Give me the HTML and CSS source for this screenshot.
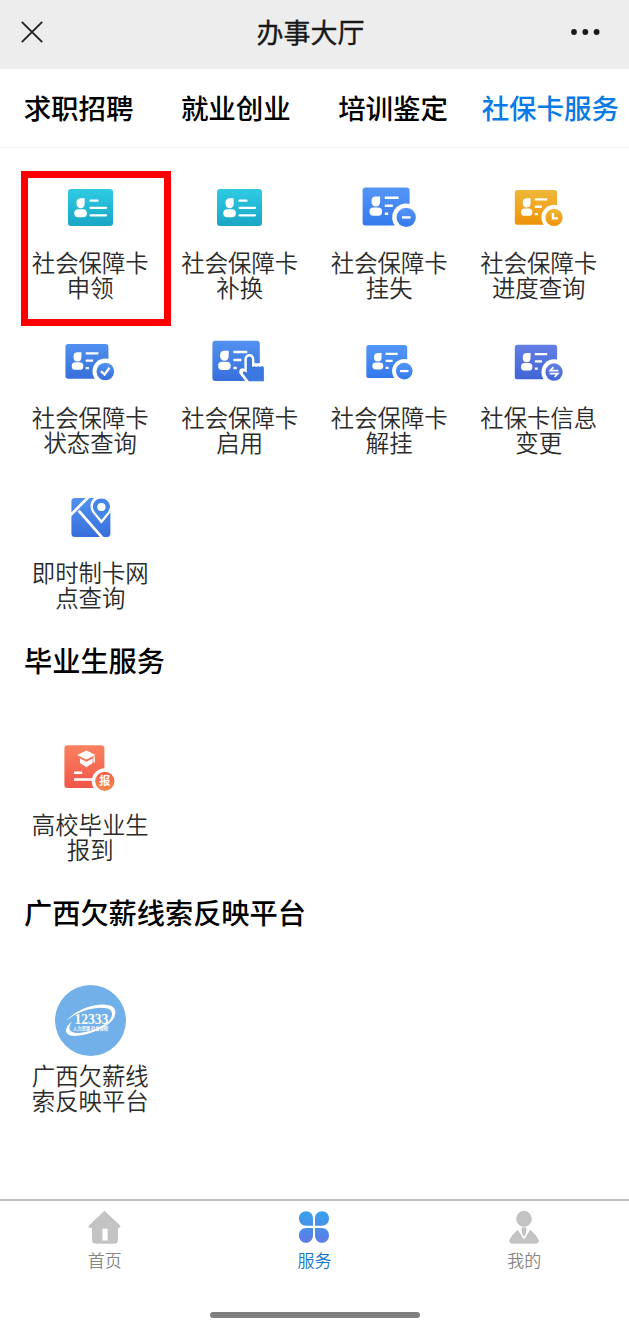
FILE: index.html
```html
<!DOCTYPE html>
<html lang="zh-CN">
<head>
<meta charset="utf-8">
<title>办事大厅</title>
<link rel="stylesheet" href="styles.css">
</head>
<body>
<svg class="defs" width="0" height="0" aria-hidden="true">
  <defs>
    <linearGradient id="teal" x1="0" y1="0" x2="0" y2="1"><stop offset="0" stop-color="#2fcbe3"/><stop offset="1" stop-color="#18a6c5"/></linearGradient>
    <linearGradient id="blue" x1="0" y1="0" x2="0" y2="1"><stop offset="0" stop-color="#5596f8"/><stop offset="1" stop-color="#3479ec"/></linearGradient>
    <linearGradient id="blue2" x1="0" y1="0" x2="0" y2="1"><stop offset="0" stop-color="#5191ef"/><stop offset="1" stop-color="#376fdb"/></linearGradient>
    <linearGradient id="gold" x1="0" y1="0" x2="0" y2="1"><stop offset="0" stop-color="#efb83a"/><stop offset="1" stop-color="#ee9308"/></linearGradient>
    <linearGradient id="indigo" x1="0" y1="0" x2="0" y2="1"><stop offset="0" stop-color="#647fe5"/><stop offset="1" stop-color="#4064d5"/></linearGradient>
    <linearGradient id="coral" x1="0" y1="0" x2="0" y2="1"><stop offset="0" stop-color="#fa8260"/><stop offset="1" stop-color="#f25548"/></linearGradient>
    <linearGradient id="orange" x1="0" y1="0" x2="0" y2="1"><stop offset="0" stop-color="#f4604b"/><stop offset="1" stop-color="#f4894d"/></linearGradient>
    <linearGradient id="clover" gradientUnits="userSpaceOnUse" x1="0" y1="0" x2="0" y2="34"><stop offset="0" stop-color="#35a4ea"/><stop offset="1" stop-color="#6079e8"/></linearGradient>
    <g id="card-lines">
      <path fill="#fff" d="M26.5 24.8v5.4a4.3 4.6 0 0 1-8.6 0v-1q0-4.4 4.4-4.4z"/>
      <rect fill="#fff" x="15.9" y="35.8" width="12.6" height="8.2" rx="4"/>
      <path stroke="#fff" stroke-width="2.5" d="M31.2 26H45M31.2 34h8M31.2 42h3.4"/>
    </g>
    <g id="badge-card">
      <rect x="9" y="15.7" width="47" height="38" rx="3"/>
      <use href="#card-lines"/>
      <circle cx="52.6" cy="45.7" r="14" fill="#fff"/>
      <circle cx="52.6" cy="45.7" r="9.6"/>
    </g>
  </defs>
</svg>

<header class="navbar">
  <svg class="close" viewBox="0 0 22 22"><path d="M.8.8l20.4 20.4M21.2.8L.8 21.2" fill="none" stroke="#222" stroke-width="1.9"/></svg>
  <h1 class="title">办事大厅</h1>
  <svg class="more" viewBox="0 0 30 8"><g fill="#1a1a1a"><circle cx="4" cy="4" r="2.9"/><circle cx="15.3" cy="4" r="2.9"/><circle cx="26.6" cy="4" r="2.9"/></g></svg>
</header>

<nav class="tabs">
  <a class="tab">求职招聘</a>
  <a class="tab">就业创业</a>
  <a class="tab">培训鉴定</a>
  <a class="tab tab-active">社保卡服务</a>
</nav>

<main class="content">
  <ul class="grid">
    <li class="item item-marked">
      <svg class="icon" viewBox="0 0 71 71"><rect x="13" y="17" width="45" height="37" rx="3" fill="url(#teal)"/><path fill="#fff" d="M29.7 26.2v5.6a4.1 4.4 0 0 1-8.2 0v-1q0-4.6 4.4-4.6z"/><rect fill="#fff" x="19.3" y="37.2" width="12.6" height="8" rx="3.9"/><path d="M35.5 28.7h7M35.5 35.8H51M35.5 43.3H51" stroke="#fff" stroke-width="2.3" stroke-linecap="round"/></svg>
      <span class="label">社会保障卡<br>申领</span>
    </li>
    <li class="item">
      <svg class="icon" viewBox="0 0 71 71"><rect x="13" y="17" width="45" height="37" rx="3" fill="url(#teal)"/><path fill="#fff" d="M29.7 26.2v5.6a4.1 4.4 0 0 1-8.2 0v-1q0-4.6 4.4-4.6z"/><rect fill="#fff" x="19.3" y="37.2" width="12.6" height="8" rx="3.9"/><path d="M35.5 28.7h7M35.5 35.8H51M35.5 43.3H51" stroke="#fff" stroke-width="2.3" stroke-linecap="round"/></svg>
      <span class="label">社会保障卡<br>补换</span>
    </li>
    <li class="item">
      <svg class="icon" viewBox="0 0 71 71"><g transform="translate(-.4 -.3)"><use href="#badge-card" fill="url(#blue)"/><path d="M48.4 45.7h8.6" stroke="#fff" stroke-width="2.4"/></g></svg>
      <span class="label">社会保障卡<br>挂失</span>
    </li>
    <li class="item">
      <svg class="icon" viewBox="0 0 71 71"><g transform="translate(3.7 3.8) scale(.9 .91)"><use href="#badge-card" fill="url(#gold)"/><path d="M51.4 40.8v6h5.6" fill="none" stroke="#fff" stroke-width="2.7"/></g></svg>
      <span class="label">社会保障卡<br>进度查询</span>
    </li>
    <li class="item">
      <svg class="icon" viewBox="0 0 71 71"><g transform="translate(2.2 2.6) scale(.915)"><use href="#badge-card" fill="url(#blue2)"/><path d="M47.8 45.3l4 3.8 5.3-7.4" fill="none" stroke="#fff" stroke-width="2.5"/></g></svg>
      <span class="label">社会保障卡<br>状态查询</span>
    </li>
    <li class="item">
      <svg class="icon" viewBox="0 0 71 71"><rect x="8.4" y="13.7" width="47.4" height="40.3" rx="3" fill="url(#blue2)"/><use href="#card-lines" transform="translate(-1.8 -1)"/><path d="M42.4 55.5l-6.6-8.6c-2-4.2 1.6-7.2 4.6-5V32.6c0-7.4 10-7.4 10 0v3.6h9.8v19.3z" fill="#fff"/><path d="M44.8 54.3l-5.6-7.6c-1-2.5 1.4-3.2 3.6-.9V32.6c0-4 5.2-4 5.2 0v7.2h1.4l.9-.9.9.9h2.1l.9-.9.9.9h1.9l.8-.9c1 .1 2.1.8 2.1 2v13.4z" fill="#3b78e0"/></svg>
      <span class="label">社会保障卡<br>启用</span>
    </li>
    <li class="item">
      <svg class="icon" viewBox="0 0 71 71"><g transform="translate(4.5 4.3) scale(.87)"><use href="#badge-card" fill="url(#blue)"/><path d="M47.8 45.7h9.6" stroke="#fff" stroke-width="2.6"/></g></svg>
      <span class="label">社会保障卡<br>解挂</span>
    </li>
    <li class="item">
      <svg class="icon" viewBox="0 0 71 71"><g transform="translate(3.7 3.5) scale(.9 .91)"><use href="#badge-card" fill="url(#indigo)"/><path d="M57.4 44.1H48.4l3.6-3.8M47.8 47.3h9l-3.6 3.8" fill="none" stroke="#fff" stroke-width="1.9"/></g></svg>
      <span class="label">社保卡信息<br>变更</span>
    </li>
    <li class="item">
      <svg class="icon" viewBox="0 0 71 71"><rect x="16.4" y="16" width="39" height="39" rx="3.5" fill="url(#blue2)"/><path d="M15.5 33.2L33.5 15M23.6 28.6L47.5 55.8" stroke="#fff" stroke-width="2.8"/><path d="M46.4 41.8L38.3 31.6C31.5 22.5 38 13.5 46.4 13.5s14.9 9 8.1 18.1z" fill="#fff"/><path d="M46.4 37.9l-6.4-7.6c-5.2-7 0-13.9 6.4-13.9s11.6 6.9 6.4 13.9z" fill="#4585e8"/><circle cx="46.4" cy="25" r="4.1" fill="#fff"/></svg>
      <span class="label">即时制卡网<br>点查询</span>
    </li>
  </ul>

  <section>
    <h2 class="heading">毕业生服务</h2>
    <ul class="grid">
      <li class="item">
        <svg class="icon" viewBox="0 0 71 71"><rect x="9.4" y="11.3" width="40" height="42.7" rx="3" fill="url(#coral)"/><path d="M22 21l9.4-4.6 9 4.6-9 4.5zM25 24.6l6.4 3.2 6.2-3.2v4.4l-6.2 4.2L25 29zM38.4 22.5h1.5v6h-1.5z" fill="#fff"/><path d="M19 38.7h8.2M19 45.6h20" stroke="#fff" stroke-width="2.5"/><circle cx="49.8" cy="47.3" r="13" fill="#fff"/><circle cx="49.8" cy="47.3" r="9.6" fill="url(#orange)"/><text class="badge-text" x="49.8" y="51.3" text-anchor="middle">报</text></svg>
        <span class="label">高校毕业生<br>报到</span>
      </li>
    </ul>
  </section>

  <section>
    <h2 class="heading">广西欠薪线索反映平台</h2>
    <ul class="grid">
      <li class="item">
        <svg class="icon" viewBox="0 0 71 71"><circle cx="35.5" cy="35.5" r="35.5" fill="#72b0e9"/><path d="M11.5 35.5C22 23.5 42 17.5 54 20.2c10 2.6 8 13-3.5 21C57.5 33 60 26 52.5 23.5 42 20.5 23 26 11.5 35.5z" fill="#fff"/><path d="M17 36.5C8 43.5 9 52 22 50.8 38 49.4 54 41 60.5 31c-8 8-22 15.3-34.5 16.8-12 1.4-14-4.2-9-11.3z" fill="#fff"/><text class="logo-number" x="36.4" y="38.8" text-anchor="middle" textLength="34" lengthAdjust="spacingAndGlyphs">12333</text><text class="logo-caption" x="18" y="45" textLength="35" lengthAdjust="spacingAndGlyphs">人力资源 社会保障</text></svg>
        <span class="label">广西欠薪线<br>索反映平台</span>
      </li>
    </ul>
  </section>
</main>

<footer class="footer">
  <nav class="tabbar">
    <a class="tabbar-item">
      <svg class="tabbar-icon" viewBox="0 0 34 34"><path d="M16.5 1.2l15.4 14.6q.8 1.7-1.1 1.7h-1.3v13q0 2.7-2.7 2.7H7.2q-2.7 0-2.7-2.7v-13H2.2q-1.9 0-1-1.7z" fill="#c3c3c3" stroke="#b7b7b7" stroke-width=".7"/><path d="M14.4 18.7h5.2v11.8h-5.2z" fill="#fff"/></svg>
      <span>首页</span>
    </a>
    <a class="tabbar-item tabbar-active">
      <svg class="tabbar-icon" viewBox="0 0 34 34"><path fill="url(#clover)" d="M16 15.8H9.5C4.5 15.8 2 12.6 2 8.3 2 4.2 5 1.2 9 1.2s7 3 7 7.4zM18 15.8h6.5c5 0 7.5-3.2 7.5-7.5 0-4.1-3-7.1-7-7.1s-7 3-7 7.4zM16 18H9.5C4.5 18 2 21.2 2 25.5c0 4.1 3 7.3 7 7.3s7-3.2 7-7.6zM18 18h6.5c5 0 7.5 3.2 7.5 7.5 0 4.1-3 7.3-7 7.3s-7-3.2-7-7.6z"/></svg>
      <span>服务</span>
    </a>
    <a class="tabbar-item">
      <svg class="tabbar-icon" viewBox="0 0 34 34"><g fill="#c3c3c3" stroke="#b7b7b7" stroke-width=".6"><ellipse cx="17" cy="8.8" rx="7.4" ry="7.6"/><path d="M10.7 20.3L17 30.3l6.3-10q5 3.7 8 9.7.7 3.2-2.4 3.2H5.1q-3 0-2.3-3.2 2.9-6 7.9-9.7z"/><path d="M15.4 17.8h3.2l.6 2.2-1 4.3L17 26l-1.2-1.7-1-4.3z"/></g></svg>
      <span>我的</span>
    </a>
  </nav>
  <div class="home-indicator"></div>
</footer>
</body>
</html>
```

FILE: styles.css
```css
*,
*::after {
  box-sizing: border-box;
}

body {
  margin: 0;
  width: 629px;
  height: 1330px;
  display: flex;
  flex-direction: column;
  overflow: hidden;
  background: #fff;
  color: #000;
  font-family: "Noto Sans CJK SC", sans-serif;
}

.defs {
  position: absolute;
}

h1,
h2,
ul {
  margin: 0;
  padding: 0;
}

.navbar {
  height: 69px;
  flex: none;
  display: grid;
  grid-template-columns: 22px 1fr 30px;
  align-items: center;
  padding: 0 29px 5px 21px;
  background: #ededed;
}

.close {
  width: 22px;
  height: 22px;
}

.title {
  padding-left: 8px;
  text-align: center;
  font-size: 27px;
  line-height: 40px;
  font-weight: 400;
  color: #181818;
  -webkit-text-stroke: 0.35px currentColor;
}

.more {
  width: 30px;
  height: 8px;
}

.tabs {
  height: 79px;
  flex: none;
  display: grid;
  grid-template-columns: repeat(4, 1fr);
  border-bottom: 1px solid #f5f5f5;
}

.tab {
  line-height: 76px;
  text-align: center;
  font-size: 27.5px;
  font-weight: 500;
  white-space: nowrap;
}

.tab-active {
  color: #0a7be6;
}

.content {
  flex: 1;
  padding: 24px 15.5px 0;
}

.grid {
  display: grid;
  grid-template-columns: repeat(4, 1fr);
  list-style: none;
}

.item {
  position: relative;
  height: 155px;
  display: flex;
  flex-direction: column;
  align-items: center;
  gap: 7px;
}

.item-marked::after {
  content: "";
  position: absolute;
  left: 5.5px;
  top: -1px;
  width: 150px;
  height: 155px;
  border: 7px solid #fe0000;
}

.icon {
  width: 71px;
  height: 71px;
  flex: none;
}

.label {
  font-size: 23.4px;
  line-height: 25px;
  font-weight: 350;
  text-align: center;
  white-space: nowrap;
  color: #2b2b2b;
}

.heading {
  height: 96.5px;
  padding-left: 8.5px;
  font-size: 28.2px;
  line-height: 46.5px;
  font-weight: 500;
}

.badge-text {
  font-size: 11px;
  font-weight: 700;
  fill: #fff;
}

.logo-number {
  font-family: "Liberation Serif", serif;
  font-size: 15px;
  font-weight: 700;
  fill: #fff;
}

.logo-caption {
  font-size: 4.5px;
  font-weight: 700;
  fill: #fff;
}

.footer {
  height: 131px;
  flex: none;
  border-top: 2px solid #bfbfbf;
}

.tabbar {
  height: 111px;
  display: grid;
  grid-template-columns: repeat(3, 1fr);
}

.tabbar-item {
  display: flex;
  flex-direction: column;
  align-items: center;
  padding-top: 9px;
  gap: 4px;
  font-size: 17px;
  line-height: 24px;
  font-weight: 350;
  color: #858585;
}

.tabbar-active {
  color: #1677c8;
}

.tabbar-icon {
  width: 34px;
  height: 34px;
}

.home-indicator {
  width: 210px;
  height: 6px;
  margin: 0 auto;
  border-radius: 3px;
  background: #808080;
}
```
